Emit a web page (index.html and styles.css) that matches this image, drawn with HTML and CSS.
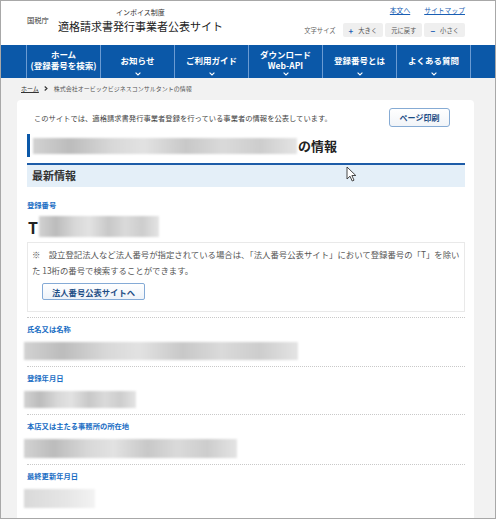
FILE: index.html
```html
<!DOCTYPE html>
<html lang="ja">
<head>
    <meta charset="UTF-8">
    <meta name="viewport" content="width=device-width, initial-scale=1.0">
    <title>適格請求書発行事業者公表サイト</title>
    <link rel="stylesheet" href="styles.css">
</head>
<body>
<div class="screen">
    <header class="site-header">
        <div class="brand">
            <span class="agency">国税庁</span>
            <div class="site-name">
                <span class="site-sub">インボイス制度</span>
                <span class="site-title">適格請求書発行事業者公表サイト</span>
            </div>
        </div>
        <div class="utility">
            <div class="util-links">
                <a href="#">本文へ</a>
                <a href="#">サイトマップ</a>
            </div>
            <div class="font-size">
                <span class="font-size-label">文字サイズ</span>
                <button class="fs-btn"><b class="fs-mark">+</b>大きく</button>
                <button class="fs-btn">元に戻す</button>
                <button class="fs-btn"><b class="fs-mark">−</b>小さく</button>
            </div>
        </div>
    </header>

    <nav class="global-nav">
        <ul>
            <li><a href="#"><span class="nav-text">ホーム<br>(登録番号を検索)</span><span class="caret caret-none"></span></a></li>
            <li><a href="#"><span class="nav-text">お知らせ</span><span class="caret"><svg width="6" height="4" viewBox="0 0 6 4"><polyline points="0.6,0.6 3,3 5.4,0.6" fill="none" stroke="#fff" stroke-width="1.1"/></svg></span></a></li>
            <li><a href="#"><span class="nav-text">ご利用ガイド</span><span class="caret"><svg width="6" height="4" viewBox="0 0 6 4"><polyline points="0.6,0.6 3,3 5.4,0.6" fill="none" stroke="#fff" stroke-width="1.1"/></svg></span></a></li>
            <li><a href="#"><span class="nav-text">ダウンロード<br>Web-API</span><span class="caret"><svg width="6" height="4" viewBox="0 0 6 4"><polyline points="0.6,0.6 3,3 5.4,0.6" fill="none" stroke="#fff" stroke-width="1.1"/></svg></span></a></li>
            <li><a href="#"><span class="nav-text">登録番号とは</span><span class="caret"><svg width="6" height="4" viewBox="0 0 6 4"><polyline points="0.6,0.6 3,3 5.4,0.6" fill="none" stroke="#fff" stroke-width="1.1"/></svg></span></a></li>
            <li><a href="#"><span class="nav-text">よくある質問</span><span class="caret"><svg width="6" height="4" viewBox="0 0 6 4"><polyline points="0.6,0.6 3,3 5.4,0.6" fill="none" stroke="#fff" stroke-width="1.1"/></svg></span></a></li>
        </ul>
    </nav>

    <div class="page">
        <div class="breadcrumb">
            <a href="#">ホーム</a>
            <svg class="crumb-sep" width="4" height="5" viewBox="0 0 4 5"><polyline points="0.7,0.5 3,2.5 0.7,4.5" fill="none" stroke="#333" stroke-width="1.1"/></svg>
            <span>株式会社オービックビジネスコンサルタントの情報</span>
        </div>

        <main class="panel">
            <div class="intro">
                <p>このサイトでは、適格請求書発行事業者登録を行っている事業者の情報を公表しています。</p>
                <button class="print-btn">ページ印刷</button>
            </div>

            <h1 class="page-title"><span class="redact redact-title"></span>の情報</h1>

            <h2 class="section-head">最新情報</h2>

            <dl class="details">
                <div class="field field-first">
                    <dt>登録番号</dt>
                    <dd class="reg-no">T<span class="redact redact-number"></span></dd>
                    <dd class="note">
                        <p>※　設立登記法人など法人番号が指定されている場合は、「法人番号公表サイト」において登録番号の「T」を除いた 13桁の番号で検索することができます。</p>
                        <a class="link-btn" href="#">法人番号公表サイトへ</a>
                    </dd>
                </div>
                <div class="field">
                    <dt>氏名又は名称</dt>
                    <dd><span class="redact redact-name"></span></dd>
                </div>
                <div class="field">
                    <dt>登録年月日</dt>
                    <dd><span class="redact redact-date"></span></dd>
                </div>
                <div class="field">
                    <dt>本店又は主たる事務所の所在地</dt>
                    <dd><span class="redact redact-address"></span></dd>
                </div>
                <div class="field">
                    <dt>最終更新年月日</dt>
                    <dd><span class="redact redact-updated"></span></dd>
                </div>
            </dl>
        </main>
    </div>

    <!-- mouse pointer -->
    <svg class="pointer" width="11" height="16" viewBox="0 0 11 16">
        <path d="M1 1 L1 13 L4 10.2 L6.2 15 L8 14.2 L5.9 9.5 L9.8 9.5 Z" fill="#fff" stroke="#333" stroke-width="0.9" stroke-linejoin="round"/>
    </svg>
</div>
</body>
</html>
```

FILE: styles.css
```css
/* CSS */
:root {
    --nav-blue: #0b58a8;
    --nav-line: #6b9bd3;
    --label-blue: #1b6ec4;
    --page-gray: #f2f2f2;
    --text-color: #333333;
    --muted: #555555;
}

body {
    margin: 0;
    padding: 0;
}

.screen {
    position: relative;
    width: 496px;
    height: 519px;
    box-sizing: border-box;
    border: 1px solid #a8a8a8;
    overflow: hidden;
    background-color: var(--page-gray);
    font-family: "Noto Sans CJK JP", "Noto Sans", sans-serif;
    color: var(--text-color);
}

p, h1, h2, dl, dd, ul {
    margin: 0;
    padding: 0;
}

a {
    color: inherit;
}

button {
    font-family: inherit;
    cursor: pointer;
}

/* header */
.site-header {
    height: 44px;
    background-color: #ffffff;
    display: flex;
    justify-content: space-between;
    align-items: flex-start;
    padding: 0 30px 0 26px;
}

.brand {
    display: flex;
    align-items: center;
    padding-top: 7px;
}

.agency {
    font-size: 7.3px;
    line-height: 9px;
    margin-right: 9px;
}

.site-name {
    display: flex;
    flex-direction: column;
    align-items: center;
    gap: 2px;
}

.site-sub {
    font-size: 7px;
    line-height: 9px;
}

.site-title {
    font-size: 11px;
    line-height: 14px;
    color: #222;
}

.utility {
    display: flex;
    flex-direction: column;
    align-items: flex-end;
    padding-top: 5px;
}

.util-links {
    display: flex;
    gap: 14px;
}

.util-links a {
    font-size: 6.8px;
    line-height: 9px;
    color: #1a5fb4;
    text-decoration: underline;
}

.font-size {
    display: flex;
    align-items: center;
    gap: 2px;
    margin-top: 8px;
}

.font-size-label {
    font-size: 6.3px;
    color: #666;
    margin-right: 5px;
}

.fs-btn {
    height: 14px;
    border: none;
    border-radius: 2px;
    background-color: #efefef;
    color: var(--muted);
    font-size: 6.3px;
    padding: 0 6px;
    display: flex;
    align-items: center;
}

.fs-mark {
    color: #1a5fb4;
    font-size: 8px;
    margin-right: 5px;
}

/* global navigation */
.global-nav {
    height: 33px;
    background-color: var(--nav-blue);
    padding-left: 25px;
}

.global-nav ul {
    list-style: none;
    display: flex;
    height: 100%;
}

.global-nav li {
    width: 73px;
    border-left: 1px solid var(--nav-line);
}

.global-nav li:last-child {
    border-right: 1px solid var(--nav-line);
}

.global-nav a {
    height: 100%;
    box-sizing: border-box;
    padding-top: 3px;
    display: flex;
    flex-direction: column;
    align-items: center;
    color: #ffffff;
    text-decoration: none;
    font-size: 8.5px;
    font-weight: bold;
    line-height: 11px;
    text-align: center;
}

.nav-text {
    flex: 1;
    display: flex;
    align-items: center;
}

.caret {
    height: 4px;
    margin-bottom: 2px;
    display: flex;
}

.caret-none {
    visibility: hidden;
    width: 6px;
}

/* page body */
.page {
    padding-left: 16px;
}

.breadcrumb {
    height: 22px;
    display: flex;
    align-items: center;
    padding: 0 0 1px 4px;
    box-sizing: border-box;
    font-size: 6px;
    color: var(--muted);
}

.breadcrumb a {
    color: #333;
    text-decoration: underline;
}

.crumb-sep {
    margin: 0 6px 0 5px;
}

.panel {
    display: block;
    width: 457px;
    min-height: 430px;
    box-sizing: border-box;
    background-color: #ffffff;
    border-radius: 4px 4px 0 0;
    padding: 8px 9px 0 10px;
}

.intro {
    display: flex;
    justify-content: space-between;
    align-items: center;
    padding: 0 15px 0 7px;
}

.intro p {
    font-size: 7.3px;
    color: #444;
}

.print-btn {
    width: 61px;
    height: 19px;
    border: 1px solid #86abd4;
    border-radius: 3px;
    background: linear-gradient(#ffffff, #f1f4f8);
    color: #1c4c84;
    font-size: 8px;
    font-weight: bold;
    padding: 0;
}

.page-title {
    margin-top: 7px;
    height: 23px;
    display: flex;
    align-items: center;
    border-left: 3px solid var(--nav-blue);
    padding-left: 3px;
    font-size: 13px;
    line-height: 16px;
    color: #222;
}

.section-head {
    margin-top: 6px;
    height: 24px;
    box-sizing: border-box;
    border-top: 2px solid #1d5ca8;
    background-color: #e4eff8;
    padding-left: 5px;
    font-size: 11px;
    line-height: 21px;
    color: #333;
}

/* blurred placeholders for withheld values */
.redact {
    display: inline-block;
    vertical-align: top;
    background: linear-gradient(90deg, #d2d2d2 0%, #bcbcbc 14%, #d8d8d8 30%, #e2e2e2 42%, #c8c8c8 58%, #dadada 72%, #cdcdcd 86%, #e4e4e4 100%);
    filter: blur(1px);
}

.redact-title {
    width: 264px;
    height: 16px;
    margin-right: 1px;
}

.redact-number {
    width: 120px;
    height: 21px;
    margin-left: 1px;
}

.redact-name {
    width: 274px;
    height: 18px;
}

.redact-date {
    width: 112px;
    height: 17px;
}

.redact-address {
    width: 213px;
    height: 19px;
}

.redact-updated {
    width: 71px;
    height: 19px;
    background: linear-gradient(90deg, #d9d9d9, #e6e6e6 60%, #f3f3f3);
}

.details .field {
    border-top: 1px dotted #c9c9c9;
    padding: 7px 0 6px;
}

.details .field-first {
    border-top: none;
    padding: 14px 0 5px;
}

.details dt {
    font-size: 7.3px;
    line-height: 9px;
    font-weight: bold;
    color: var(--label-blue);
}

.details dd {
    display: flex;
    margin-top: 8px;
    margin-left: -3px;
}

.details .reg-no {
    margin: 6px 0 0 1px;
    height: 21px;
    align-items: center;
    font-size: 16px;
    font-weight: bold;
    color: #222;
}

.details .note {
    display: block;
    margin: 5px 0 0;
    border: 1px solid #e9e9e9;
    padding: 3px 2px 11px 4px;
}

.note p {
    font-size: 8.4px;
    line-height: 16px;
    color: var(--muted);
}

.link-btn {
    display: flex;
    align-items: center;
    justify-content: center;
    width: 103px;
    height: 17px;
    box-sizing: border-box;
    margin: 5px 0 0 10px;
    border: 1px solid #84aad6;
    border-radius: 2px;
    background: linear-gradient(#ffffff, #eef3f9);
    color: #1f4f86;
    font-size: 8.3px;
    font-weight: bold;
    text-decoration: none;
}

.pointer {
    position: absolute;
    left: 345px;
    top: 165px;
}
```
